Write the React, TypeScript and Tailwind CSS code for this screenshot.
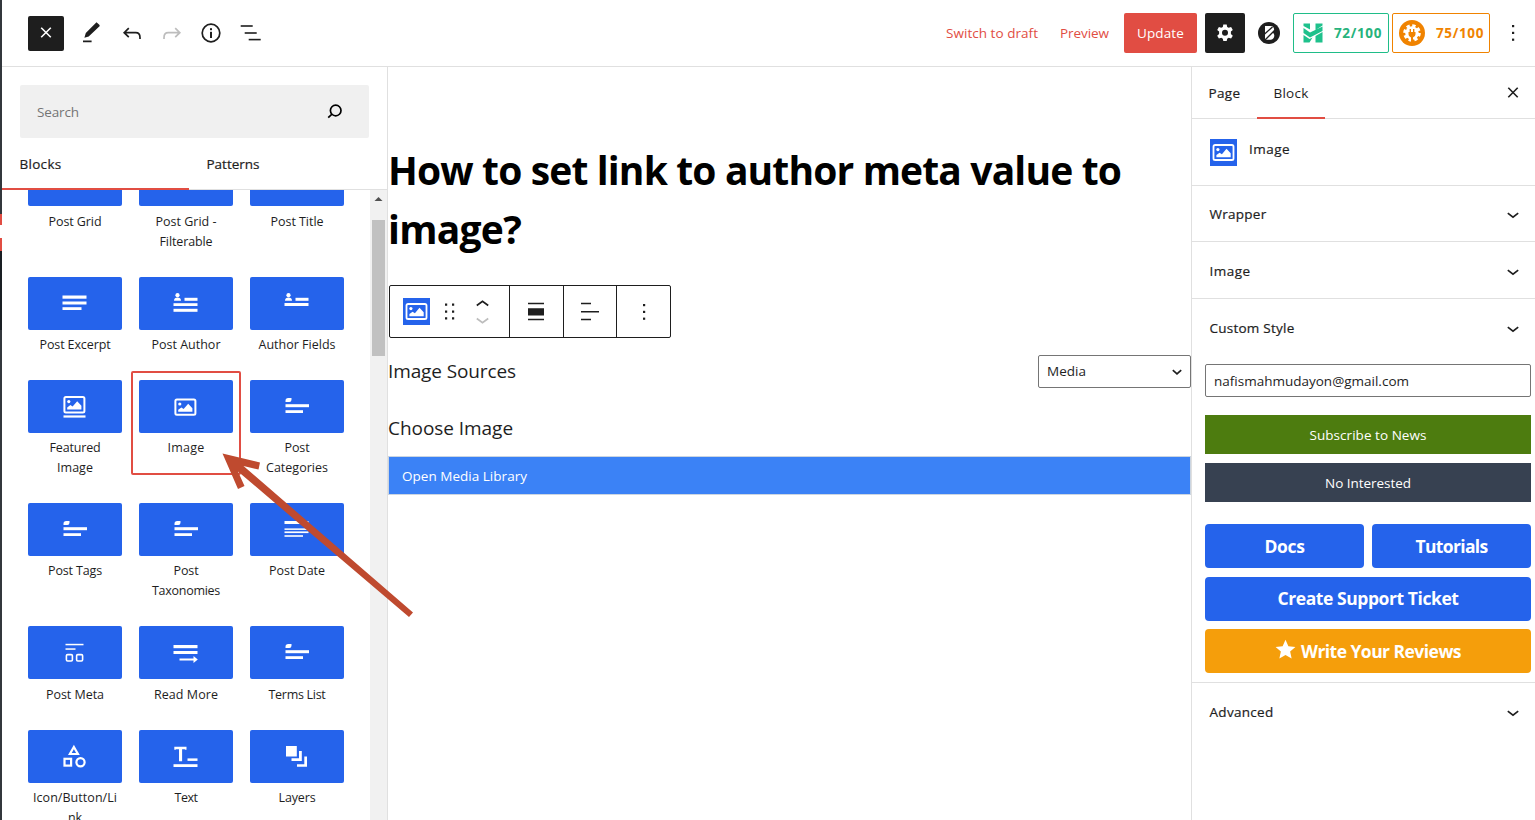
import { ReactNode, useLayoutEffect, useRef } from "react";

function Txt({ w, className = "", children }: { w: number; className?: string; children: string }) {
  const ref = useRef<HTMLSpanElement>(null);
  useLayoutEffect(() => {
    const el = ref.current;
    if (!el) return;
    el.style.letterSpacing = "0px";
    const natural = el.getBoundingClientRect().width;
    el.style.letterSpacing = (w - natural) / children.length + "px";
  }, [w, children]);
  return (
    <span ref={ref} className={"inline-block whitespace-pre " + className}>
      {children}
    </span>
  );
}

function Svg({ w = 24, h = 24, box = "0 0 24 24", className = "", children }: { w?: number; h?: number; box?: string; className?: string; children: ReactNode }) {
  return (
    <svg width={w} height={h} viewBox={box} className={"shrink-0 " + className} fill="currentColor">
      {children}
    </svg>
  );
}

const dots = (
  <>
    <rect x="11" y="4" width="2.200" height="2.200" />
    <rect x="11" y="10.800" width="2.200" height="2.200" />
    <rect x="11" y="17.600" width="2.200" height="2.200" />
  </>
);

function ChevronDown() {
  return (
    <Svg className="text-[#1e1e1e]">
      <path d="M6.800 10.200l5.200 4 5.200-4" fill="none" stroke="currentColor" strokeWidth="1.700" />
    </Svg>
  );
}

function ImageBadge() {
  return (
    <span className="flex h-[27px] w-[27px] items-center justify-center bg-[#2563eb] text-white">
      <Svg w={25} h={25} box="0 0 24 25">
        <rect x="2" y="5" width="20" height="15" rx="1.600" fill="none" stroke="currentColor" strokeWidth="1.800" />
        <circle cx="6.400" cy="9.600" r="1.600" />
        <path d="M4.900 17.300v-2.200l3.200-2.300 2.300 1.500 4.600-5.500L19.200 13.300v4z" />
      </Svg>
    </span>
  );
}

const person = (
  <>
    <circle cx="4.500" cy="4.200" r="2.100" />
    <path d="M1 9.800c0-2.400 1.400-3.200 3.500-3.200S8 7.400 8 9.800z" />
    <rect x="11.500" y="6.800" width="13" height="3" />
  </>
);

const glyphs: Record<string, ReactNode> = {
  excerpt: (
    <>
      <rect x="0.500" y="4.500" width="24" height="3.200" />
      <rect x="0.500" y="10.500" width="24" height="3" />
      <rect x="0.500" y="16.200" width="19" height="2.800" />
    </>
  ),
  author: (
    <>
      {person}
      <rect x="0.500" y="12.200" width="24" height="2.800" />
      <rect x="0.500" y="17.800" width="24" height="3" />
    </>
  ),
  fields: (
    <>
      {person}
      <rect x="0.500" y="12" width="24" height="3" />
    </>
  ),
  featured: (
    <>
      <rect x="2.400" y="3" width="20" height="15.600" rx="1.500" fill="none" stroke="currentColor" strokeWidth="2" />
      <circle cx="6.800" cy="7.600" r="1.600" />
      <path d="M5.200 15.400v-2l3.200-2.300 2.200 1.400 4.600-5.200 4.200 4.500v3.600z" />
      <rect x="1.500" y="21.400" width="22" height="2.200" />
    </>
  ),
  image: (
    <>
      <rect x="2.400" y="5.500" width="20" height="15.300" rx="1.500" fill="none" stroke="currentColor" strokeWidth="2" />
      <circle cx="6.800" cy="10" r="1.600" />
      <path d="M5.200 17.800v-2l3.200-2.300 2.200 1.400 4.600-5.200 4.200 4.500v3.600z" />
    </>
  ),
  tag: (
    <>
      <path d="M1.500 7.900V6.700a2.700 2.700 0 0 1 2.700-2.700H7.500V5.700A2.200 2.200 0 0 1 5.300 7.900z" />
      <rect x="1.500" y="10.200" width="24" height="3" />
      <rect x="1.500" y="16.200" width="17.500" height="2.800" />
    </>
  ),
  date: (
    <>
      <rect x="0.500" y="4" width="24" height="3" />
      <rect x="0.500" y="11.400" width="24" height="1.500" />
      <rect x="0.500" y="14.400" width="24" height="1.700" />
      <rect x="0.500" y="18.200" width="18.500" height="1.600" />
    </>
  ),
  meta: (
    <>
      <rect x="3.500" y="3.800" width="18" height="1.500" />
      <rect x="3.500" y="8.300" width="10" height="1.500" />
      <rect x="4.400" y="14.600" width="6" height="6.400" rx="1.200" fill="none" stroke="currentColor" strokeWidth="1.600" />
      <rect x="14.600" y="14.600" width="6" height="6.400" rx="1.200" fill="none" stroke="currentColor" strokeWidth="1.600" />
    </>
  ),
  more: (
    <>
      <rect x="0.500" y="5" width="24" height="3.200" />
      <rect x="0.500" y="11" width="24" height="3" />
      <path d="M6.500 18.500h14v-2.600l4.300 3.500-4.300 3.600v-2.500h-14z" />
    </>
  ),
  shapes: (
    <>
      <path d="M11.900 3l4 7H7.900z" fill="none" stroke="currentColor" strokeWidth="2.200" />
      <rect x="2.500" y="14.800" width="6.600" height="6.800" fill="none" stroke="currentColor" strokeWidth="2.200" />
      <circle cx="18.500" cy="18.200" r="4.100" fill="none" stroke="currentColor" strokeWidth="2.200" />
    </>
  ),
  text: (
    <>
      <path d="M1.300 2.800h12.200v3h-1.100l-.8-.6H9.100v12H6V5.200H3.200l-.8.6H1.300z" />
      <rect x="14.500" y="14.400" width="10" height="2.500" />
      <rect x="0.500" y="20.200" width="24" height="2.800" />
    </>
  ),
  layers: (
    <>
      <rect x="2" y="2" width="10.800" height="10.500" />
      <path d="M15 7h2.800v10H7.500v-2.700H15z" />
      <path d="M20.300 12.500H23v10.300H13v-2.600h7.300z" />
    </>
  ),
};

type Tile = { icon: string; lines: [string, number][] };

const rows: { h: string; gap: string; tiles: Tile[] }[] = [
  { h: "h-[124px]", gap: "mb-[6px]", tiles: [
    { icon: "excerpt", lines: [["Post Grid", 53]] },
    { icon: "excerpt", lines: [["Post Grid -", 61], ["Filterable", 53]] },
    { icon: "excerpt", lines: [["Post Title", 53]] },
  ] },
  { h: "h-[103px]", gap: "mb-[5px]", tiles: [
    { icon: "excerpt", lines: [["Post Excerpt", 71]] },
    { icon: "author", lines: [["Post Author", 69]] },
    { icon: "fields", lines: [["Author Fields", 77]] },
  ] },
  { h: "h-[123px]", gap: "mb-[5px]", tiles: [
    { icon: "featured", lines: [["Featured", 51], ["Image", 36]] },
    { icon: "image", lines: [["Image", 37]] },
    { icon: "tag", lines: [["Post", 25], ["Categories", 62]] },
  ] },
  { h: "h-[123px]", gap: "mb-[5px]", tiles: [
    { icon: "tag", lines: [["Post Tags", 54]] },
    { icon: "tag", lines: [["Post", 25], ["Taxonomies", 68]] },
    { icon: "date", lines: [["Post Date", 56]] },
  ] },
  { h: "h-[104px]", gap: "mb-[6px]", tiles: [
    { icon: "meta", lines: [["Post Meta", 58]] },
    { icon: "more", lines: [["Read More", 64]] },
    { icon: "tag", lines: [["Terms List", 57]] },
  ] },
  { h: "h-[123px]", gap: "mb-[5px]", tiles: [
    { icon: "shapes", lines: [["Icon/Button/Li", 84], ["nk", 14]] },
    { icon: "text", lines: [["Text", 23]] },
    { icon: "layers", lines: [["Layers", 37]] },
  ] },
];

function TopBar() {
  return (
    <header className="flex h-[67px] shrink-0 items-center border-b border-[#e0e0e0] pl-[26px]">
      <button className="flex h-[35px] w-9 items-center justify-center rounded-[2px] bg-[#1e1e1e] text-white">
        <Svg>
          <path d="M7.200 6.700l9.600 9.600M16.800 6.700l-9.600 9.600" fill="none" stroke="currentColor" strokeWidth="1.600" />
        </Svg>
      </button>
      <Svg className="ml-[15px] text-[#1e1e1e]">
        <path d="M20.300 3.800L17.500 1.300 6.800 12l-1.400 4.800 4.300-1.300L20.800 5zM4 19.600h8.600v1.600H4z" />
      </Svg>
      <Svg className="ml-[17px] text-[#1e1e1e]">
        <path d="M8.800 7.200L4.200 11.700l4.600 4.500M4.200 11.700h11.600c2.800 0 4.200 1.400 4.200 5v1.200" fill="none" stroke="currentColor" strokeWidth="1.700" />
      </Svg>
      <Svg className="ml-4 text-[#bdbdbd]">
        <path d="M15.200 7.200l4.600 4.500-4.600 4.500M19.800 11.700H8.200c-2.800 0-4.200 1.400-4.200 5v1.200" fill="none" stroke="currentColor" strokeWidth="1.700" />
      </Svg>
      <Svg className="ml-[15px] text-[#1e1e1e]">
        <circle cx="12" cy="12" r="8.800" fill="none" stroke="currentColor" strokeWidth="1.700" />
        <rect x="11" y="7.200" width="2" height="2" />
        <rect x="11" y="10.800" width="2" height="6.200" />
      </Svg>
      <Svg className="ml-4 text-[#1e1e1e]">
        <rect x="1.700" y="4.200" width="12" height="1.600" />
        <rect x="5.700" y="11.200" width="12" height="1.600" />
        <rect x="9.700" y="17.800" width="12" height="1.600" />
      </Svg>
      <div className="ml-auto flex items-center text-[13.5px] text-[#e14d43]">
        <Txt w={92}>Switch to draft</Txt>
        <Txt w={49} className="ml-[22px]">Preview</Txt>
        <button className="ml-[15px] flex h-10 w-[73px] items-center justify-center rounded-[2px] bg-[#e14d43] text-white">
          <Txt w={47}>Update</Txt>
        </button>
        <button className="ml-2 flex h-10 w-10 items-center justify-center rounded-[2px] bg-[#1e1e1e] text-white">
          <Svg>
            <path fillRule="evenodd" d="M10.300 3.500h3.400l.5 2.400 1.500.9 2.400-.8 1.700 2.900-1.900 1.700v2.400l1.900 1.700-1.700 2.900-2.400-.8-1.500.9-.5 2.400h-3.400l-.5-2.400-1.500-.9-2.400.8-1.700-2.900 1.900-1.700v-2.400L4.200 8.900 5.900 6l2.400.8 1.500-.9zM12 8.800a3 3 0 1 0 0 6 3 3 0 0 0 0-6z" />
          </Svg>
        </button>
        <Svg w={22} h={22} box="0 0 22 22" className="ml-[13px] text-[#1e1e1e]">
          <circle cx="11" cy="11" r="11" />
          <path d="M7 4h5.500c4 0 4.600 4.600 2.200 6.500 3 2.200 1.600 7.300-2.400 7.300H7z" fill="white" />
          <path d="M5.500 13L14.500 5M7 18L16.500 8.500" fill="none" stroke="currentColor" strokeWidth="1.300" />
        </Svg>
        <div className="ml-[13px] flex h-10 w-24 items-center rounded-[2px] border border-[#1fbd88] pl-[9px] font-bold text-[#27b37c]">
          <Svg w={20} h={20} box="0 0 20 20" className="text-[#1fc18c]">
            <path d="M.5 .5H7v6L.5 3zM12.500 .500h7v2L12.500 7zM.5 5L7 9.500l12.500-6V8L7 14.500 .500 10zM.500 12L6.500 16l3-1.500L6.500 19.500h-6zM12.500 13l7-4v10.500h-7z" />
          </Svg>
          <Txt w={48} className="ml-[11px]">72/100</Txt>
        </div>
        <div className="ml-[3px] flex h-10 w-[98px] items-center rounded-[2px] border border-[#f08300] pl-[6px] font-bold text-[#f08300]">
          <Svg w={26} h={26} box="0 0 26 26">
            <circle cx="13" cy="13" r="13" />
            <circle cx="13" cy="13" r="6.800" fill="white" />
            <circle cx="13" cy="13" r="7.300" fill="none" stroke="white" strokeWidth="3" strokeDasharray="3.300 2.434" />
            <path d="M9.500 12h7v2.200a3.400 3.400 0 0 1-2.500 3.300V23h-2v-5.500a3.400 3.400 0 0 1-2.500-3.300zM10.600 9h1.400v3h-1.400zM14 9h1.400v3H14z" />
          </Svg>
          <Txt w={48} className="ml-[11px]">75/100</Txt>
        </div>
        <Svg className="mr-[10px] ml-[11px] text-[#1e1e1e]">{dots}</Svg>
      </div>
    </header>
  );
}

function Inserter() {
  return (
    <aside className="flex w-[386px] shrink-0 flex-col border-r border-[#e0e0e0]">
      <div className="mt-[18px] mr-[18px] ml-[18px] flex h-[53px] shrink-0 items-center justify-between rounded-[2px] bg-[#f0f0f0] pr-[22px] pl-[17px] text-[13.5px] text-[#757575]">
        <Txt w={42} className="pt-0.5">Search</Txt>
        <Svg className="text-black">
          <circle cx="12.700" cy="10.500" r="5.300" fill="none" stroke="currentColor" strokeWidth="1.700" />
          <path d="M9 14.200l-3.800 3.500" fill="none" stroke="currentColor" strokeWidth="1.700" />
        </Svg>
      </div>
      <div className="flex h-[52px] shrink-0 border-b border-[#e0e0e0] text-[13.5px] font-medium text-[#1e1e1e] [-webkit-text-stroke:0.2px_#1e1e1e]">
        <div className="-mb-px flex w-[187px] items-center border-b-2 border-[#e14d43] pt-[3px] pl-[17.5px]">
          <Txt w={42}>Blocks</Txt>
        </div>
        <div className="flex items-center pt-0.5 pl-[17.5px]">
          <Txt w={53}>Patterns</Txt>
        </div>
      </div>
      <div className="flex min-h-0 flex-1">
        <div className="flex w-[368px] flex-col overflow-hidden pl-[26px]">
          <div className="-mt-[37px]">
            {rows.map((row, i) => (
              <div key={i} className={"flex gap-[17px] " + row.h}>
                {row.tiles.map((t, j) => (
                  <div key={j} className="relative w-[94px] text-center text-[12.5px] leading-5 text-[#1e1e1e]">
                    <div className={"flex h-[53px] items-center justify-center rounded-[2px] bg-[#2563eb] pr-px text-white " + row.gap}>
                      <Svg w={25} h={25} box="0 0 25 25">{glyphs[t.icon]}</Svg>
                    </div>
                    {t.lines.map(([s, w]) => (
                      <div key={s} className="h-5"><Txt w={w}>{s}</Txt></div>
                    ))}
                    {t.icon === "image" && (
                      <div className="absolute -top-[9px] -left-2 h-[104px] w-[110px] rounded-[2px] border-2 border-[#e14d43]" />
                    )}
                  </div>
                ))}
              </div>
            ))}
          </div>
        </div>
        <div className="flex w-[17px] flex-col items-center bg-[#f1f1f1]">
          <Svg w={17} h={30} box="0 0 17 30" className="text-[#505050]"><path d="M4.500 11L8.500 7l4 4z" /></Svg>
          <div className="h-[136px] w-[13px] bg-[#c1c1c1]" />
        </div>
      </div>
    </aside>
  );
}

function Editor() {
  return (
    <main className="flex w-[803px] shrink-0 flex-col">
      <h1 className="mt-[73px] text-[39px] leading-[59px] font-bold text-black">
        <Txt w={733}>How to set link to author meta value to</Txt>
        <br />
        <Txt w={133}>image?</Txt>
      </h1>
      <div className="mt-[27px] ml-px flex h-[53px] w-[282px] divide-x divide-[#1e1e1e] rounded-[2px] border border-[#1e1e1e] text-[#1e1e1e]">
        <div className="flex w-[120px] items-center pl-[13px]">
          <ImageBadge />
          <Svg className="ml-[7px]">
            <path d="M8 3.500h2.200v2.200H8zM15 3.500h2.200v2.200H15zM8 10.500h2.200v2.200H8zM15 10.500h2.200v2.200H15zM8 17.300h2.200v2.200H8zM15 17.300h2.200v2.200H15z" />
          </Svg>
          <Svg w={24} h={34} box="0 0 24 34" className="ml-[9px]">
            <path d="M6.800 10.500L12.500 6.200l5.700 4.300" fill="none" stroke="currentColor" strokeWidth="1.700" />
            <path d="M6.800 23.500L12.500 27.800l5.700-4.300" fill="none" stroke="#bdbdbd" strokeWidth="1.700" />
          </Svg>
        </div>
        <div className="flex w-[54px] items-center justify-center pr-0.5">
          <Svg><path d="M4 2.800h16v1.500H4zM4 8.200h16v7.300H4zM4 18.800h16v1.500H4z" /></Svg>
        </div>
        <div className="flex w-[53px] items-center justify-center">
          <Svg><path d="M3 2.800h10v1.500H3zM3 10.900h18v1.500H3zM3 18.800h10v1.500H3z" /></Svg>
        </div>
        <div className="flex w-[53px] items-center justify-center"><Svg>{dots}</Svg></div>
      </div>
      <div className="mt-[17px] flex h-[33px] items-center justify-between text-[19px] text-[#1e1e1e]">
        <Txt w={128}>Image Sources</Txt>
        <div className="flex h-[33px] w-[153px] items-center justify-between rounded-[2px] border border-[#757575] pr-[1px] pl-2 text-[13.5px]">
          <Txt w={39}>Media</Txt>
          <Svg><path d="M7.800 10.200l4.200 3.600 4.200-3.600" fill="none" stroke="currentColor" strokeWidth="1.700" /></Svg>
        </div>
      </div>
      <div className="mt-[25px] h-[30px] text-[19px] leading-[30px] text-[#1e1e1e]"><Txt w={125}>Choose Image</Txt></div>
      <button className="mt-[13px] flex h-[39px] shrink-0 items-center border border-[#cbd5e1] bg-[#3b82f6] pl-[13px] text-[13.5px] text-white">
        <Txt w={125} className="pt-0.5">Open Media Library</Txt>
      </button>
    </main>
  );
}

function Panel({ title, w, h }: { title: string; w: number; h: string }) {
  return (
    <div className={"flex shrink-0 items-center justify-between pr-[10px] pl-[17.5px] font-medium [-webkit-text-stroke:0.2px_#1e1e1e] " + h}>
      <Txt w={w}>{title}</Txt>
      <ChevronDown />
    </div>
  );
}

function Settings() {
  return (
    <aside className="flex min-w-0 flex-1 flex-col border-l border-[#e0e0e0] text-[13.5px] text-[#1e1e1e]">
      <div className="flex h-[52px] shrink-0 items-center border-b border-[#e0e0e0] font-medium">
        <div className="w-[65px] pt-0.5 pl-[16.5px] [-webkit-text-stroke:0.2px_#1e1e1e]"><Txt w={32}>Page</Txt></div>
        <div className="-mb-px flex h-[52px] w-[68px] items-center justify-center border-b-2 border-[#e14d43] pt-[3px]"><Txt w={35}>Block</Txt></div>
        <Svg className="mr-[10px] ml-auto">
          <path d="M7.300 6.800l9.400 9.400M16.700 6.800l-9.400 9.400" fill="none" stroke="currentColor" strokeWidth="1.600" />
        </Svg>
      </div>
      <div className="flex h-[67px] shrink-0 items-center border-b border-[#e0e0e0] pl-[17.5px] font-medium [-webkit-text-stroke:0.2px_#1e1e1e]">
        <ImageBadge />
        <Txt w={41} className="-mt-[5px] ml-[12.5px]">Image</Txt>
      </div>
      <Panel title="Wrapper" w={57} h="h-[56px] border-b border-[#e0e0e0] pt-0.5" />
      <Panel title="Image" w={41} h="h-[57px] border-b border-[#e0e0e0] pt-[3px]" />
      <Panel title="Custom Style" w={85} h="h-[58px] pt-px" />
      <div className="flex flex-col pt-[7px] pr-1 pl-[13px] text-white">
        <div className="flex h-[33px] items-center rounded-[2px] border border-[#757575] pl-2 text-[#1e1e1e]">
          <Txt w={195} className="pt-0.5">nafismahmudayon@gmail.com</Txt>
        </div>
        <button className="mt-[18px] h-[39px] bg-[#4d7c0f]"><Txt w={117} className="pt-0.5">Subscribe to News</Txt></button>
        <button className="mt-[9px] h-[39px] bg-[#374151]"><Txt w={86} className="pt-0.5">No Interested</Txt></button>
        <div className="mt-[22px] flex gap-2 text-[17.5px] font-bold">
          <button className="h-11 flex-1 rounded-[4px] bg-[#2563eb]"><Txt w={40}>Docs</Txt></button>
          <button className="h-11 flex-1 rounded-[4px] bg-[#2563eb]"><Txt w={72}>Tutorials</Txt></button>
        </div>
        <button className="mt-[9px] h-11 rounded-[4px] bg-[#2563eb] text-[17.5px] font-bold"><Txt w={181} className="pb-px">Create Support Ticket</Txt></button>
        <button className="mt-2 flex h-11 items-center justify-center gap-[5px] rounded-[4px] bg-[#f59e0b] text-[17.5px] font-bold">
          <Svg w={21} h={21} box="0 0 24 24" className="-mt-[3px]">
            <path d="M12 .8l3.300 7.400 8 .8-6 5.400 1.700 8L12 18.300l-7 4.100 1.700-8-6-5.400 8-.8z" />
          </Svg>
          <Txt w={160}>Write Your Reviews</Txt>
        </button>
      </div>
      <Panel title="Advanced" w={64} h="mt-[9px] h-[60px] border-t border-[#e0e0e0]" />
    </aside>
  );
}

export default function App() {
  return (
    <div className="relative flex h-[820px] w-[1535px] overflow-hidden bg-white font-['Open_Sans','Noto_Sans',sans-serif]">
      <div className="flex w-[2px] shrink-0 flex-col bg-[#32373c] pt-[214px]">
        <div className="h-[11px] bg-[#e14d43]" />
        <div className="h-[13px] bg-white" />
        <div className="h-[13px] bg-[#e14d43]" />
        <div className="h-[79px] bg-[#191e23]" />
      </div>
      <div className="flex min-w-0 flex-1 flex-col">
        <TopBar />
        <div className="flex min-h-0 flex-1">
          <Inserter />
          <Editor />
          <Settings />
        </div>
      </div>
      <svg className="pointer-events-none absolute top-[450px] left-[218px]" width="200" height="170" viewBox="218 450 200 170">
        <path d="M222.500 453.500L260 462.500 258.500 469.500 243.500 466 413 612.500 409 617 238 471.500 244.500 486 238 489z" fill="#bf4a2f" />
      </svg>
    </div>
  );
}
